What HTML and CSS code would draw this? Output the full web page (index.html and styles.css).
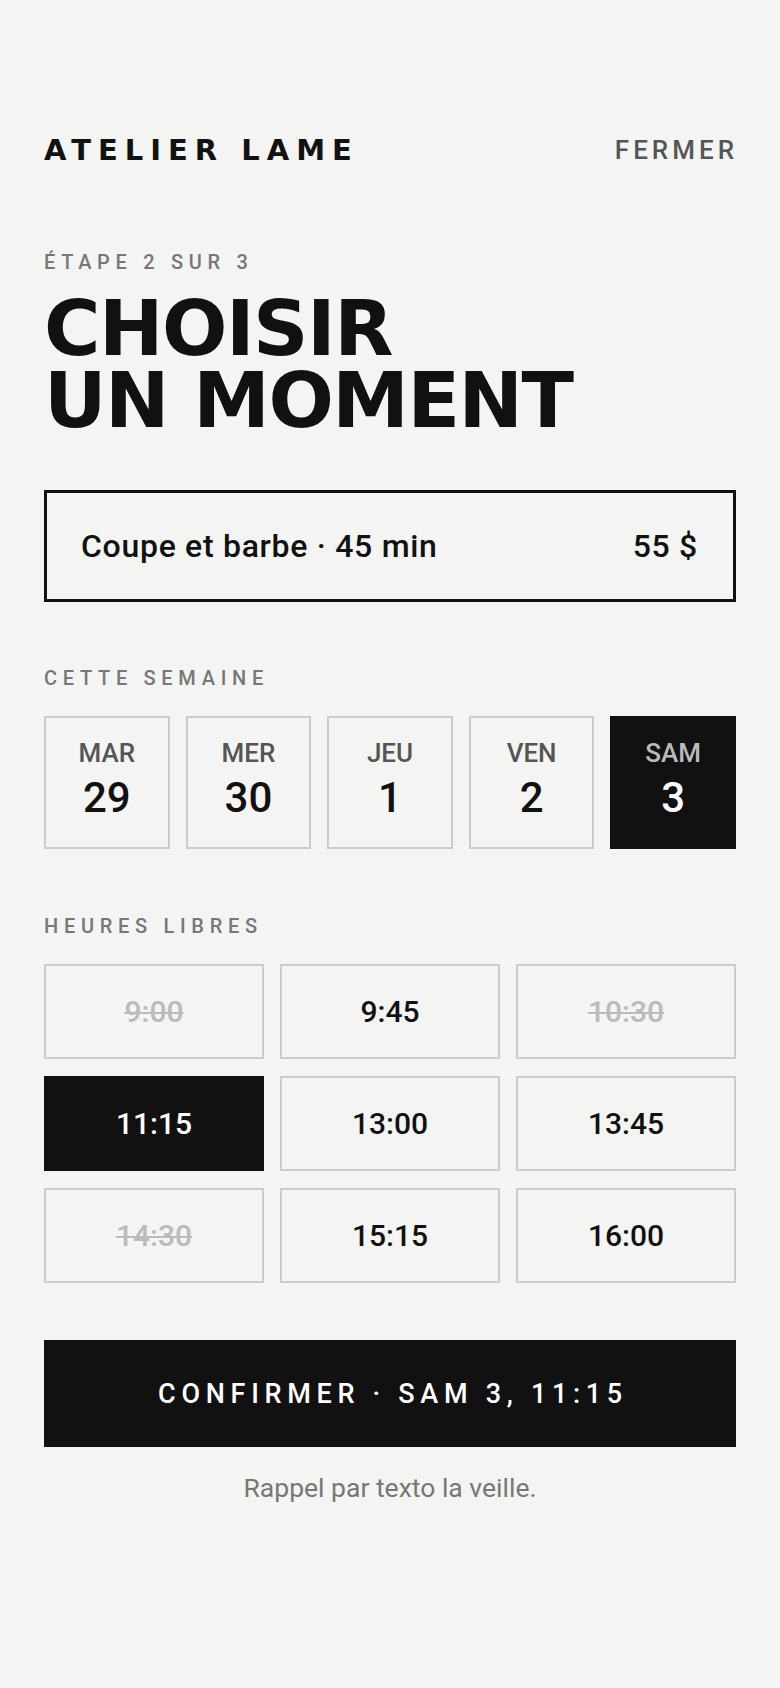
FILE: index.html
```html
<!DOCTYPE html>
<html lang="fr">
<head>
    <meta charset="UTF-8">
    <meta name="viewport" content="width=device-width, initial-scale=1.0">
    <title>Atelier Lame · Choisir un moment</title>
    <link rel="stylesheet" href="styles.css">
</head>
<body>
    <div class="page">
        <header class="topbar">
            <div class="brand">ATELIER LAME</div>
            <a class="close" href="#">FERMER</a>
        </header>

        <div class="step">ÉTAPE 2 SUR 3</div>
        <h1 class="title">
            <span class="title-line">CHOISIR</span>
            <span class="title-line">UN MOMENT</span>
        </h1>

        <div class="service">
            <span>Coupe et barbe · 45 min</span>
            <span>55 $</span>
        </div>

        <div class="section-label">CETTE SEMAINE</div>
        <div class="days">
            <div class="day"><span class="day-name">MAR</span><span class="day-num">29</span></div>
            <div class="day"><span class="day-name">MER</span><span class="day-num">30</span></div>
            <div class="day"><span class="day-name">JEU</span><span class="day-num">1</span></div>
            <div class="day"><span class="day-name">VEN</span><span class="day-num">2</span></div>
            <div class="day selected"><span class="day-name">SAM</span><span class="day-num">3</span></div>
        </div>

        <div class="section-label hours-label">HEURES LIBRES</div>
        <div class="slots">
            <div class="slot taken">9:00</div>
            <div class="slot">9:45</div>
            <div class="slot taken">10:30</div>
            <div class="slot selected">11:15</div>
            <div class="slot">13:00</div>
            <div class="slot">13:45</div>
            <div class="slot taken">14:30</div>
            <div class="slot">15:15</div>
            <div class="slot">16:00</div>
        </div>

        <button class="confirm">CONFIRMER · SAM 3, 11:15</button>
        <p class="note">Rappel par texto la veille.</p>
    </div>
</body>
</html>
```

FILE: styles.css
```css
body {
    margin: 0;
    background: #f4f4f2;
    color: #111;
    font-family: Roboto, "Liberation Sans", Arial, sans-serif;
    font-weight: 500;
}

.page {
    padding: 130px 44px 80px;
}

/* en-tête */
.topbar {
    display: flex;
    justify-content: space-between;
    align-items: center;
    height: 40px;
}

.brand {
    font-family: "DejaVu Sans", sans-serif;
    font-size: 29px;
    font-weight: bold;
    letter-spacing: 7px;
    line-height: 40px;
}

.close {
    font-size: 26px;
    letter-spacing: 4px;
    margin-right: -2px;
    color: #555;
    text-decoration: none;
    line-height: 40px;
}

.step {
    margin-top: 80px;
    font-size: 20px;
    line-height: 24px;
    letter-spacing: 5.7px;
    color: #777;
}

.title {
    margin: 19px 0 0;
    font-family: "DejaVu Sans", sans-serif;
    font-size: 77px;
    font-weight: bold;
    letter-spacing: -1.5px;
}

.title-line {
    display: block;
    height: 72px;
    line-height: 72px;
}

/* service choisi */
.service {
    margin-top: 53px;
    border: 3px solid #111;
    padding: 35px 35px 35px 34px;
    display: flex;
    justify-content: space-between;
    font-size: 32px;
    line-height: 36px;
    letter-spacing: 0.7px;
}

.section-label {
    margin-top: 64px;
    font-size: 20px;
    line-height: 24px;
    letter-spacing: 5.7px;
    color: #777;
}

.hours-label {
    margin-top: 65px;
}

/* jours */
.days {
    margin-top: 26px;
    display: grid;
    grid-template-columns: repeat(5, 1fr);
    gap: 16px;
}

.day {
    border: 2px solid #ccc;
    padding: 20px 0 26px;
    display: flex;
    flex-direction: column;
    align-items: center;
    gap: 7px;
}

.day-name {
    font-size: 26px;
    line-height: 30px;
    color: #555;
}

.day-num {
    font-size: 42px;
    line-height: 46px;
    color: #111;
}

.day.selected {
    background: #111;
    border-color: #111;
}

.day.selected .day-name {
    color: #bbb;
}

.day.selected .day-num {
    color: #fff;
}

/* heures */
.slots {
    margin-top: 26px;
    display: grid;
    grid-template-columns: repeat(3, 1fr);
    gap: 17px 16px;
}

.slot {
    box-sizing: border-box;
    height: 95px;
    border: 2px solid #ccc;
    display: flex;
    align-items: center;
    justify-content: center;
    font-size: 30px;
    color: #111;
}

.slot.taken {
    color: #bbb;
    text-decoration: line-through;
    text-decoration-thickness: 2px;
}

.slot.selected {
    background: #111;
    border-color: #111;
    color: #fff;
}

.confirm {
    display: block;
    width: 100%;
    height: 107px;
    margin-top: 57px;
    border: none;
    background: #111;
    color: #fff;
    font-family: inherit;
    font-weight: 500;
    font-size: 27px;
    letter-spacing: 5.7px;
    padding: 0 0 0 6px;
    cursor: pointer;
}

.note {
    margin: 25px 0 0;
    text-align: center;
    font-size: 26.5px;
    font-weight: normal;
    line-height: 32px;
    color: #777;
}
```
